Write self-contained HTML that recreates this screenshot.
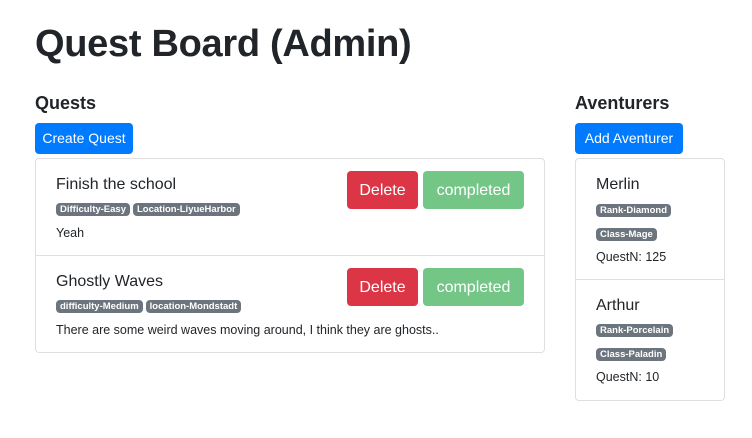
<!DOCTYPE html>
<html><head><meta charset="utf-8"><style>
*{box-sizing:border-box;margin:0;padding:0}
body{width:752px;height:438px;background:#fff;font-family:"Liberation Sans",sans-serif;color:#212529;position:relative;overflow:hidden}
.a{position:absolute}
.f{display:flex}
h1{font-size:38px;font-weight:bold;left:35px;top:23px;letter-spacing:-0.3px}
h4{font-size:18px;font-weight:bold}
.btn{position:absolute;color:#fff;border-radius:4px;text-align:center}
.blue{background:#007bff;font-size:14px;line-height:31px;height:31px}
.card{position:absolute;border:1px solid #dfdfdf;border-radius:4px}
.sep{position:absolute;left:0;right:0;height:1px;background:#dfdfdf}
.t{position:absolute;font-size:16px}
.badge{display:block;background:#6c757d;color:#fff;font-size:9.5px;font-weight:bold;padding:0 4px;height:13px;line-height:13px;border-radius:4px;margin-right:3px}
.s{position:absolute;font-size:12.5px}
.del{background:#dc3545;font-size:16px;height:38px;line-height:40px;width:71px}
.comp{background:#73c686;font-size:16px;height:38px;line-height:40px;width:101px}
</style></head><body>
<h1 class="a">Quest Board (Admin)</h1>
<h4 class="a" style="left:35px;top:93px">Quests</h4>
<div class="btn blue" style="left:35px;top:123px;width:98px">Create Quest</div>
<div class="card" style="left:35px;top:158px;width:510px;height:195px">
 <div class="sep" style="top:96px"></div>
 <div class="t" style="left:20px;top:17px">Finish the school</div>
 <div class="a f" style="left:20px;top:44px"><span class="badge">Difficulty-Easy</span><span class="badge">Location-LiyueHarbor</span></div>
 <div class="s" style="left:20px;top:67px">Yeah</div>
 <div class="btn del" style="left:311px;top:12px">Delete</div>
 <div class="btn comp" style="left:387px;top:12px">completed</div>
 <div class="t" style="left:20px;top:114px">Ghostly Waves</div>
 <div class="a f" style="left:20px;top:141px"><span class="badge">difficulty-Medium</span><span class="badge">location-Mondstadt</span></div>
 <div class="s" style="left:20px;top:164px">There are some weird waves moving around, I think they are ghosts..</div>
 <div class="btn del" style="left:311px;top:109px">Delete</div>
 <div class="btn comp" style="left:387px;top:109px">completed</div>
</div>
<h4 class="a" style="left:575px;top:93px">Aventurers</h4>
<div class="btn blue" style="left:575px;top:123px;width:108px">Add Aventurer</div>
<div class="card" style="left:575px;top:158px;width:150px;height:243px">
 <div class="sep" style="top:120px"></div>
 <div class="t" style="left:20px;top:17px">Merlin</div>
 <div class="a f" style="left:20px;top:45px"><span class="badge">Rank-Diamond</span></div>
 <div class="a f" style="left:20px;top:69px"><span class="badge">Class-Mage</span></div>
 <div class="s" style="left:20px;top:91px">QuestN: 125</div>
 <div class="t" style="left:20px;top:138px">Arthur</div>
 <div class="a f" style="left:20px;top:165px"><span class="badge">Rank-Porcelain</span></div>
 <div class="a f" style="left:20px;top:189px"><span class="badge">Class-Paladin</span></div>
 <div class="s" style="left:20px;top:211px">QuestN: 10</div>
</div>
</body></html>
